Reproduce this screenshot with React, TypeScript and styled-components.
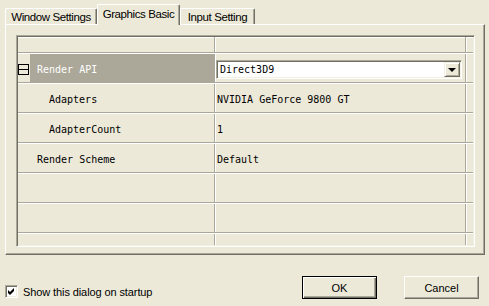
import React from 'react';
import styled, { createGlobalStyle } from 'styled-components';

const BG = '#ECE9D8';
const SHADOW = '#ACA899';
const DARK = '#716F64';

const GlobalStyle = createGlobalStyle`
  html, body {
    margin: 0;
    padding: 0;
    background: ${BG};
  }
  * {
    box-sizing: border-box;
  }
`;

interface TabProps {
  $active?: boolean;
  $w: number;
}

interface IndentProps {
  $indent: number;
  $selected?: boolean;
}

const Dialog = styled.div`
  width: 489px;
  height: 306px;
  padding: 4px 4px 0 5px;
  background: ${BG};
  font-family: "Liberation Sans", Arial, sans-serif;
  font-size: 11px;
  color: #000;
  display: flex;
  flex-direction: column;
`;

const TabStrip = styled.div`
  display: flex;
  align-items: flex-end;
  height: 20px;
`;

const Tab = styled.div<TabProps>`
  position: relative;
  z-index: ${(p) => (p.$active ? 1 : 0)};
  width: ${(p) => p.$w}px;
  height: ${(p) => (p.$active ? 21 : 16)}px;
  margin-bottom: ${(p) => (p.$active ? -1 : 0)}px;
  padding-bottom: ${(p) => (p.$active ? 2 : 0)}px;
  display: flex;
  align-items: center;
  justify-content: center;
  background: ${BG};
  border-top: 1px solid #fff;
  border-left: 1px solid #fff;
  border-right: 1px solid ${DARK};
  border-top-left-radius: 2px;
  border-top-right-radius: 2px;
  box-shadow: inset -1px 0 0 ${SHADOW};
  font-size: 11.5px;
  letter-spacing: -0.4px;
  white-space: nowrap;
`;

const TabPanel = styled.div`
  width: 480px;
  height: 231px;
  padding: 10px 9px 7px 10px;
  border-top: 1px solid #fff;
  border-left: 1px solid #fff;
  border-right: 1px solid ${DARK};
  border-bottom: 1px solid ${DARK};
  box-shadow: inset -1px -1px 0 ${SHADOW};
  display: flex;
`;

const Grid = styled.div`
  flex: 1;
  padding: 1px;
  border-top: 1px solid ${SHADOW};
  border-left: 1px solid ${SHADOW};
  border-right: 1px solid #fff;
  border-bottom: 1px solid #fff;
  box-shadow: inset 1px 1px 0 ${DARK}, inset -1px -1px 0 #F1EFE2;
  display: flex;
  flex-direction: column;
  font-family: "DejaVu Sans Mono", "Liberation Mono", monospace;
  font-size: 10px;
`;

const HeaderRow = styled.div`
  display: flex;
  height: 16px;
  flex-shrink: 0;
  border-bottom: 1px solid ${SHADOW};
  box-shadow: inset 0 1px 0 #fff;
`;

const HeadLabel = styled.div`
  width: 197px;
  border-right: 1px solid ${SHADOW};
`;

const HeadValue = styled.div`
  flex: 1;
  border-left: 1px solid #fff;
  border-right: 1px solid ${SHADOW};
`;

const Extra = styled.div`
  width: 7px;
  border-left: 1px solid #fff;
`;

const Row = styled.div`
  display: flex;
  height: 30px;
  flex-shrink: 0;
  border-top: 1px solid #fff;
  border-bottom: 1px solid ${SHADOW};
`;

const FillerRow = styled(Row)`
  flex: 1;
  height: auto;
  border-bottom: none;
`;

const Gutter = styled.div`
  width: 12px;
  display: flex;
  align-items: center;
  padding-top: 3px;
`;

const Expander = styled.div`
  position: relative;
  width: 11px;
  height: 11px;
  border: 1px solid #000;

  &::after {
    content: '';
    position: absolute;
    left: 0;
    right: 0;
    top: 4px;
    height: 1px;
    background: #000;
  }
`;

const LabelCell = styled.div<IndentProps>`
  width: 185px;
  display: flex;
  align-items: center;
  padding: 3px 0 0 ${(p) => p.$indent}px;
  border-right: 1px solid ${SHADOW};
  background: ${(p) => (p.$selected ? SHADOW : 'transparent')};
  color: ${(p) => (p.$selected ? '#fff' : '#000')};
  white-space: nowrap;
`;

const ValueCell = styled.div`
  flex: 1;
  display: flex;
  align-items: center;
  padding: 3px 0 0 1px;
  border-left: 1px solid #fff;
  border-right: 1px solid ${SHADOW};
  white-space: nowrap;
`;

const Combo = styled.div`
  width: 246px;
  height: 19px;
  margin-left: -1px;
  display: flex;
  align-items: center;
  padding: 0 1px 0 2px;
  background: #fff;
  border-top: 1px solid ${SHADOW};
  border-left: 1px solid ${SHADOW};
  border-right: 1px solid #fff;
  border-bottom: 1px solid #fff;
  box-shadow: inset 1px 1px 0 ${DARK}, inset -1px -1px 0 #F1EFE2;
`;

const ComboText = styled.span`
  flex: 1;
  padding-left: 1px;
`;

const ComboButton = styled.div`
  width: 16px;
  height: 15px;
  display: flex;
  align-items: center;
  justify-content: center;
  background: ${BG};
  border-top: 1px solid #F1EFE2;
  border-left: 1px solid #F1EFE2;
  border-right: 1px solid ${DARK};
  border-bottom: 1px solid ${DARK};
  box-shadow: inset 1px 1px 0 #fff, inset -1px -1px 0 ${SHADOW};
`;

const Arrow = styled.div`
  width: 0;
  height: 0;
  border-left: 4px solid transparent;
  border-right: 4px solid transparent;
  border-top: 4px solid #000;
  margin-top: 1px;
`;

const Footer = styled.div`
  flex: 1;
  display: flex;
  align-items: flex-start;
  padding: 21px 6px 0 0;
`;

const CheckLabel = styled.label`
  display: flex;
  align-items: center;
  gap: 5px;
  margin-top: 9px;
  letter-spacing: -0.1px;
`;

const CheckBox = styled.span`
  width: 13px;
  height: 13px;
  display: flex;
  align-items: center;
  justify-content: center;
  background: #fff;
  border-top: 1px solid ${SHADOW};
  border-left: 1px solid ${SHADOW};
  border-right: 1px solid #fff;
  border-bottom: 1px solid #fff;
  box-shadow: inset 1px 1px 0 ${DARK}, inset -1px -1px 0 #F1EFE2;
`;

const Buttons = styled.div`
  margin-left: auto;
  display: flex;
  gap: 27px;
`;

const Button = styled.button<{ $default?: boolean }>`
  width: 75px;
  height: 23px;
  padding: 0;
  font-family: "Liberation Sans", Arial, sans-serif;
  font-size: 11px;
  color: #000;
  background: ${BG};
  border: 1px solid ${(p) => (p.$default ? '#000' : '#fff')};
  border-right-color: ${(p) => (p.$default ? '#000' : DARK)};
  border-bottom-color: ${(p) => (p.$default ? '#000' : DARK)};
  box-shadow: ${(p) =>
    p.$default
      ? `inset 1px 1px 0 #fff, inset -1px -1px 0 ${DARK}, inset -2px -2px 0 ${SHADOW}`
      : `inset -1px -1px 0 ${SHADOW}`};
`;

const properties = [
  { name: 'Render API', value: 'Direct3D9', level: 0, combo: true, selected: true },
  { name: 'Adapters', value: 'NVIDIA GeForce 9800 GT', level: 1 },
  { name: 'AdapterCount', value: '1', level: 1 },
  { name: 'Render Scheme', value: 'Default', level: 0 },
  { name: '', value: '', level: 0 },
  { name: '', value: '', level: 0 },
];

const App: React.FC = () => {
  return (
    <>
      <GlobalStyle />
      <Dialog>
        <TabStrip>
          <Tab $w={92}>Window Settings</Tab>
          <Tab $w={83} $active>Graphics Basic</Tab>
          <Tab $w={75}>Input Setting</Tab>
        </TabStrip>
        <TabPanel>
          <Grid>
            <HeaderRow>
              <HeadLabel />
              <HeadValue />
              <Extra />
            </HeaderRow>
            {properties.map((p, i) => (
              <Row key={i}>
                <Gutter>{p.combo && <Expander />}</Gutter>
                <LabelCell $indent={p.level ? 19 : 7} $selected={p.selected}>
                  {p.name}
                </LabelCell>
                <ValueCell>
                  {p.combo ? (
                    <Combo>
                      <ComboText>{p.value}</ComboText>
                      <ComboButton>
                        <Arrow />
                      </ComboButton>
                    </Combo>
                  ) : (
                    p.value
                  )}
                </ValueCell>
                <Extra />
              </Row>
            ))}
            <FillerRow>
              <Gutter />
              <LabelCell $indent={7} />
              <ValueCell />
              <Extra />
            </FillerRow>
          </Grid>
        </TabPanel>
        <Footer>
          <CheckLabel>
            <CheckBox>
              <svg width="7" height="7" viewBox="0 0 7 7">
                <path d="M0 2 L2 4 L6 0 L6 3 L2 7 L0 5 Z" fill="#000" />
              </svg>
            </CheckBox>
            Show this dialog on startup
          </CheckLabel>
          <Buttons>
            <Button $default>OK</Button>
            <Button>Cancel</Button>
          </Buttons>
        </Footer>
      </Dialog>
    </>
  );
};

export default App;
